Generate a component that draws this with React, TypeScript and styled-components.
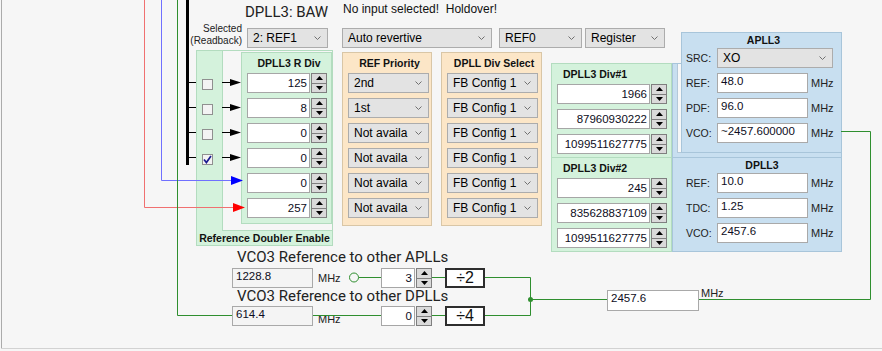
import React from "react";
import styled, { createGlobalStyle, css } from "styled-components";

const UI = `"Liberation Sans", Arial, sans-serif`;
const HEAD = `Roboto, "Liberation Sans", Arial, sans-serif`;
const WIRE = "#2f8f2f";

const GlobalStyle = createGlobalStyle`
    *, *::before, *::after { box-sizing: border-box; }
    html, body { margin: 0; padding: 0; background: #f6f6f6; }
    body { font-family: ${UI}; color: #222; }
`;

const Canvas = styled.div`
    position: relative;
    width: 882px;
    height: 351px;
    overflow: hidden;
    background: #f6f6f6;

    &::before {
        content: "";
        position: absolute;
        left: 1px;
        top: 0;
        width: 1px;
        height: 349px;
        background: #ababab;
    }
    &::after {
        content: "";
        position: absolute;
        left: 1px;
        right: 0;
        top: 348px;
        height: 1px;
        background: #d2d2d2;
    }
`;

const Wires = styled.svg`
    position: absolute;
    left: 0;
    top: 0;
    z-index: 5;
    pointer-events: none;
`;

/* ---------- text ---------- */

const ModeTitle = styled.div`
    position: absolute;
    left: 245px;
    top: 3px;
    font: 15px/18px ${HEAD};
    color: #222;
`;

const ReadbackCaption = styled.div`
    position: absolute;
    left: 180px;
    top: 23px;
    width: 62px;
    text-align: right;
    font: 10px/12px ${UI};
    color: #222;
`;

const StatusLine = styled.div`
    position: absolute;
    left: 343px;
    top: 2px;
    font: 12px/14px ${UI};
    white-space: pre;
    color: #111;
`;

/* ---------- controls ---------- */

const SelectBox = styled.div<{ $w: number; $ml?: number }>`
    flex: none;
    width: ${(p) => p.$w}px;
    height: 20px;
    margin-left: ${(p) => p.$ml ?? 0}px;
    display: flex;
    align-items: center;
    justify-content: space-between;
    padding: 0 6px 0 5px;
    border: 1px solid #acacac;
    background: #e3e3e3;
    font: 12px/14px ${UI};
    color: #000;
    white-space: nowrap;
    overflow: hidden;
`;

const Chevron: React.FC = () => (
    <svg width="7" height="4" viewBox="0 0 7 4">
        <polyline points="0.5,0.5 3.5,3.5 6.5,0.5" fill="none" stroke="#707070" strokeWidth="1" />
    </svg>
);

const Select: React.FC<{ value: string; width: number; ml?: number }> = ({ value, width, ml }) => (
    <SelectBox $w={width} $ml={ml}>
        <span>{value}</span>
        <Chevron />
    </SelectBox>
);

const SpinRow = styled.div`
    display: flex;
    height: 20px;
    flex: none;
`;

const SpinField = styled.div<{ $w: number }>`
    width: ${(p) => p.$w}px;
    height: 20px;
    border: 1px solid #a6a6a6;
    background: #fff;
    padding-right: 2px;
    text-align: right;
    font: 11.5px/18px ${UI};
    color: #0d0d22;
    white-space: nowrap;
`;

const Spinner = styled.div`
    display: flex;
    flex-direction: column;
    width: 16px;
    height: 20px;
    margin-left: 1px;
`;

const SpinButton = styled.div`
    flex: 1;
    display: flex;
    align-items: center;
    justify-content: center;
    border: 1px solid #7f7f7f;
    background: #dadada;

    & + & {
        border-top: none;
    }
`;

const SpinInput: React.FC<{ value: string; width: number }> = ({ value, width }) => (
    <SpinRow>
        <SpinField $w={width}>{value}</SpinField>
        <Spinner>
            <SpinButton>
                <svg width="7" height="4" viewBox="0 0 7 4">
                    <polygon points="0,4 3.5,0 7,4" fill="#000" />
                </svg>
            </SpinButton>
            <SpinButton>
                <svg width="7" height="4" viewBox="0 0 7 4">
                    <polygon points="0,0 7,0 3.5,4" fill="#000" />
                </svg>
            </SpinButton>
        </Spinner>
    </SpinRow>
);

const Readout = styled.div<{ $w: number; $muted?: boolean }>`
    flex: none;
    width: ${(p) => p.$w}px;
    height: 20px;
    border: 1px solid #a9a9a9;
    background: ${(p) => (p.$muted ? "#f4f4f4" : "#fff")};
    padding-left: 3px;
    font: 11.5px/14px ${UI};
    color: #0d0d22;
`;

const Unit = styled.span<{ $align?: string }>`
    align-self: ${(p) => p.$align ?? "center"};
    font: 11px/13px ${UI};
    color: #222;
`;

const CheckBox = styled.div`
    width: 11px;
    height: 11px;
    border: 1px solid #909090;
    background: #f3f3f3;
    display: flex;
    align-items: center;
    justify-content: center;
`;

/* ---------- panels ---------- */

const greenFill = css`
    background: #d4f2dc;
    border: 1px solid #b3dcbf;
`;

const tanFill = css`
    background: #fce6c7;
    border: 1px solid #d9c6a6;
`;

const blueFill = css`
    background: #c8dff0;
    border: 1px solid #a8c5da;
`;

const PanelTitle = styled.div<{ $h?: number; $left?: boolean }>`
    height: ${(p) => p.$h ?? 20}px;
    font: bold 10.5px/${(p) => p.$h ?? 20}px ${UI};
    color: #111;
    text-align: ${(p) => (p.$left ? "left" : "center")};
    white-space: nowrap;
`;

const Rows = styled.div`
    display: flex;
    flex-direction: column;
    gap: 5px;
`;

const ReadbackSelect = styled.div`
    position: absolute;
    left: 247px;
    top: 28px;
`;

const ControlBar = styled.div`
    position: absolute;
    left: 342px;
    top: 28px;
    display: flex;
`;

const DoublerGroup = styled.div`
    position: absolute;
    left: 196px;
    top: 50px;
    width: 137px;
    height: 196px;
    display: flex;
    flex-direction: column;
    ${greenFill};
`;

const DoublerBody = styled.div`
    display: flex;
    height: 180px;
`;

const CheckColumn = styled.div`
    width: 25px;
    display: flex;
    flex-direction: column;
    gap: 14px;
    padding: 28px 0 0 5px;
`;

const ArrowBay = styled.div`
    flex: 1;
    padding: 1px 0 0 18px;
    background: #f6f6f6;
    border-left: 1px solid #b3dcbf;
    border-bottom: 1px solid #b3dcbf;
`;

const DoublerLabel = styled.div`
    height: 14px;
    text-align: center;
    font: bold 10.5px/14px ${UI};
    color: #111;
`;

const RDivPanel = styled.div`
    width: 91px;
    height: 172px;
    padding-left: 5px;
    ${greenFill};
`;

const TanPanel = styled.div<{ $x: number; $w: number }>`
    position: absolute;
    left: ${(p) => p.$x}px;
    top: 52px;
    width: ${(p) => p.$w}px;
    height: 174px;
    padding-left: 5px;
    ${tanFill};
`;

const DivStack = styled.div`
    position: absolute;
    left: 551px;
    top: 63px;
    width: 121px;
    height: 189px;
    display: flex;
    flex-direction: column;
    ${greenFill};
`;

const DivSection = styled.div`
    height: 93px;
    padding-left: 5px;

    & + & {
        height: 94px;
        border-top: 1px solid #b3dcbf;
    }
`;

const SectionTitle = styled(PanelTitle)`
    padding-left: 6px;
`;

const BlueGroup = styled.div`
    position: absolute;
    left: 672px;
    top: 63px;
    width: 170px;
    height: 189px;
    display: flex;
    flex-direction: column;
    ${blueFill};
`;

const BlueTop = styled.div`
    height: 93px;
    padding-left: 4px;
`;

const BlueInset = styled.div`
    height: 89px;
    background: #f8f8f8;
    border-left: 1px solid #b4c8d8;
    border-bottom: 1px solid #b4c8d8;
`;

const PllSection = styled.div`
    flex: 1;
    border-top: 1px solid #a8c5da;
    padding-left: 13px;
`;

const PllTitleOffset = styled(PanelTitle)`
    margin-left: -3px;
`;

const ApllPanel = styled.div`
    position: absolute;
    left: 681px;
    top: 32px;
    width: 161px;
    height: 121px;
    padding-left: 4px;
    ${blueFill};
`;

const FieldRow = styled.div`
    display: flex;
    align-items: center;
    height: 20px;
`;

const FieldLabel = styled.span`
    width: 31px;
    flex: none;
    font: 10.5px/13px ${UI};
    color: #222;
`;

const FieldUnit = styled.span`
    margin-left: 3px;
    font: 11px/13px ${UI};
    color: #222;
`;

/* ---------- bottom: VCO3 references ---------- */

const RefBlock = styled.div`
    position: absolute;
    left: 232px;
    top: 249px;
    display: flex;
    flex-direction: column;
`;

const RefHeading = styled.div<{ $mb: number }>`
    margin-left: 5px;
    margin-bottom: ${(p) => p.$mb}px;
    font: 15px/17px ${HEAD};
    color: #222;
    white-space: nowrap;
`;

const RefRow = styled.div`
    display: flex;
    height: 20px;
`;

const RefUnit = styled(Unit)`
    width: 63px;
    margin-left: 5px;
    flex: none;
`;

const Divider = styled.div`
    width: 40px;
    height: 20px;
    margin-left: 13px;
    border: 2px solid #2e2e2e;
    background: #fff;
    display: flex;
    align-items: center;
    justify-content: center;
    font: 16px/16px ${UI};
    color: #111;
`;

const OutputNode = styled.div`
    position: absolute;
    left: 607px;
    top: 287px;
    display: flex;
    align-items: flex-start;
    gap: 2px;
`;

const OutputBox = styled(Readout)`
    margin-top: 3px;
    height: 21px;
`;

const rDivValues = ["125", "8", "0", "0", "0", "257"];
const priorities = ["2nd", "1st", "Not availa", "Not availa", "Not availa", "Not availa"];
const divSelects = Array(6).fill("FB Config 1");
const div1 = ["1966", "87960930222", "1099511627775"];
const div2 = ["245", "835628837109", "1099511627775"];
const checks = [false, false, false, true];
const busRows = [82, 107, 132, 157];

const Checkmark: React.FC = () => (
    <svg width="9" height="9" viewBox="0 0 9 9">
        <polyline points="1,4.5 3.4,7.5 8,1" fill="none" stroke="#1b1b90" strokeWidth="1.7" />
    </svg>
);

const WireLayer: React.FC = () => (
    <Wires width="882" height="351" viewBox="0 0 882 351">
        <g fill="none" strokeWidth="1">
            <polyline points="144.5,0 144.5,207.5 234,207.5" stroke="#f07070" />
            <polyline points="161.5,0 161.5,180.5 232,180.5" stroke="#7070ff" />
            <polyline points="177.5,0 177.5,315.5 232,315.5" stroke={WIRE} />
            <polyline points="841,131.5 870.5,131.5 870.5,299.5 699,299.5" stroke={WIRE} />
            <line x1="358.5" y1="277.5" x2="381" y2="277.5" stroke={WIRE} />
            <line x1="432" y1="277.5" x2="445" y2="277.5" stroke={WIRE} />
            <line x1="313" y1="315.5" x2="381" y2="315.5" stroke={WIRE} />
            <line x1="432" y1="315.5" x2="445" y2="315.5" stroke={WIRE} />
            <polyline points="485,277.5 530.5,277.5 530.5,315.5 485,315.5" stroke={WIRE} />
            <line x1="530.5" y1="299.5" x2="607" y2="299.5" stroke={WIRE} />
        </g>
        <polygon points="233,203 245,207.5 233,212" fill="#ff0000" />
        <polygon points="231,176 243,180.5 231,185" fill="#0000ff" />
        <rect x="186" y="0" width="3" height="165" fill="#000" />
        {busRows.map((y) => (
            <g key={y}>
                <line x1="189" y1={y + 0.5} x2="196" y2={y + 0.5} stroke="#000" />
                <line x1="222" y1={y + 0.5} x2="232" y2={y + 0.5} stroke="#000" />
                <polygon points={`230,${y - 3} 241,${y + 0.5} 230,${y + 4}`} fill="#000" />
            </g>
        ))}
        <circle cx="354" cy="277.5" r="4.5" fill="#f6f6f6" stroke={WIRE} />
        <circle cx="530.5" cy="299.5" r="2.5" fill={WIRE} />
    </Wires>
);

export default function App() {
    return (
        <>
            <GlobalStyle />
            <Canvas>
                <ModeTitle>DPLL3: BAW</ModeTitle>
                <ReadbackCaption>
                    Selected
                    <br />
                    (Readback)
                </ReadbackCaption>
                <StatusLine>No input selected!  Holdover!</StatusLine>

                <ReadbackSelect>
                    <Select value="2: REF1" width={81} />
                </ReadbackSelect>

                <ControlBar>
                    <Select value="Auto revertive" width={150} />
                    <Select value="REF0" width={83} ml={7} />
                    <Select value="Register" width={80} ml={3} />
                </ControlBar>

                <DoublerGroup>
                    <DoublerBody>
                        <CheckColumn>
                            {checks.map((on, i) => (
                                <CheckBox key={i}>{on && <Checkmark />}</CheckBox>
                            ))}
                        </CheckColumn>
                        <ArrowBay>
                            <RDivPanel>
                                <PanelTitle>DPLL3 R Div</PanelTitle>
                                <Rows>
                                    {rDivValues.map((v, i) => (
                                        <SpinInput key={i} value={v} width={63} />
                                    ))}
                                </Rows>
                            </RDivPanel>
                        </ArrowBay>
                    </DoublerBody>
                    <DoublerLabel>Reference Doubler Enable</DoublerLabel>
                </DoublerGroup>

                <TanPanel $x={342} $w={90}>
                    <PanelTitle>REF Priority</PanelTitle>
                    <Rows>
                        {priorities.map((v, i) => (
                            <Select key={i} value={v} width={81} />
                        ))}
                    </Rows>
                </TanPanel>

                <TanPanel $x={441} $w={101}>
                    <PanelTitle>DPLL Div Select</PanelTitle>
                    <Rows>
                        {divSelects.map((v, i) => (
                            <Select key={i} value={v} width={91} />
                        ))}
                    </Rows>
                </TanPanel>

                <DivStack>
                    <DivSection>
                        <SectionTitle $left>DPLL3 Div#1</SectionTitle>
                        <Rows>
                            {div1.map((v, i) => (
                                <SpinInput key={i} value={v} width={93} />
                            ))}
                        </Rows>
                    </DivSection>
                    <DivSection>
                        <SectionTitle $left>DPLL3 Div#2</SectionTitle>
                        <Rows>
                            {div2.map((v, i) => (
                                <SpinInput key={i} value={v} width={93} />
                            ))}
                        </Rows>
                    </DivSection>
                </DivStack>

                <BlueGroup>
                    <BlueTop>
                        <BlueInset />
                    </BlueTop>
                    <PllSection>
                        <PllTitleOffset $h={15}>DPLL3</PllTitleOffset>
                        <Rows>
                            {[
                                ["REF:", "10.0"],
                                ["TDC:", "1.25"],
                                ["VCO:", "2457.6"],
                            ].map(([label, value]) => (
                                <FieldRow key={label}>
                                    <FieldLabel>{label}</FieldLabel>
                                    <Readout $w={91}>{value}</Readout>
                                    <FieldUnit>MHz</FieldUnit>
                                </FieldRow>
                            ))}
                        </Rows>
                    </PllSection>
                </BlueGroup>

                <ApllPanel>
                    <PanelTitle $h={15}>APLL3</PanelTitle>
                    <Rows>
                        <FieldRow>
                            <FieldLabel>SRC:</FieldLabel>
                            <Select value="XO" width={116} />
                        </FieldRow>
                        {[
                            ["REF:", "48.0"],
                            ["PDF:", "96.0"],
                            ["VCO:", "~2457.600000"],
                        ].map(([label, value]) => (
                            <FieldRow key={label}>
                                <FieldLabel>{label}</FieldLabel>
                                <Readout $w={91}>{value}</Readout>
                                <FieldUnit>MHz</FieldUnit>
                            </FieldRow>
                        ))}
                    </Rows>
                </ApllPanel>

                <RefBlock>
                    <RefHeading $mb={2}>VCO3 Reference to other APLLs</RefHeading>
                    <RefRow>
                        <Readout $w={81} $muted>1228.8</Readout>
                        <RefUnit>MHz</RefUnit>
                        <SpinInput value="3" width={34} />
                        <Divider>÷2</Divider>
                    </RefRow>
                    <RefHeading $mb={1}>VCO3 Reference to other DPLLs</RefHeading>
                    <RefRow>
                        <Readout $w={81} $muted>614.4</Readout>
                        <RefUnit $align="flex-end">MHz</RefUnit>
                        <SpinInput value="0" width={34} />
                        <Divider>÷4</Divider>
                    </RefRow>
                </RefBlock>

                <OutputNode>
                    <OutputBox $w={92}>2457.6</OutputBox>
                    <Unit $align="flex-start">MHz</Unit>
                </OutputNode>

                <WireLayer />
            </Canvas>
        </>
    );
}
